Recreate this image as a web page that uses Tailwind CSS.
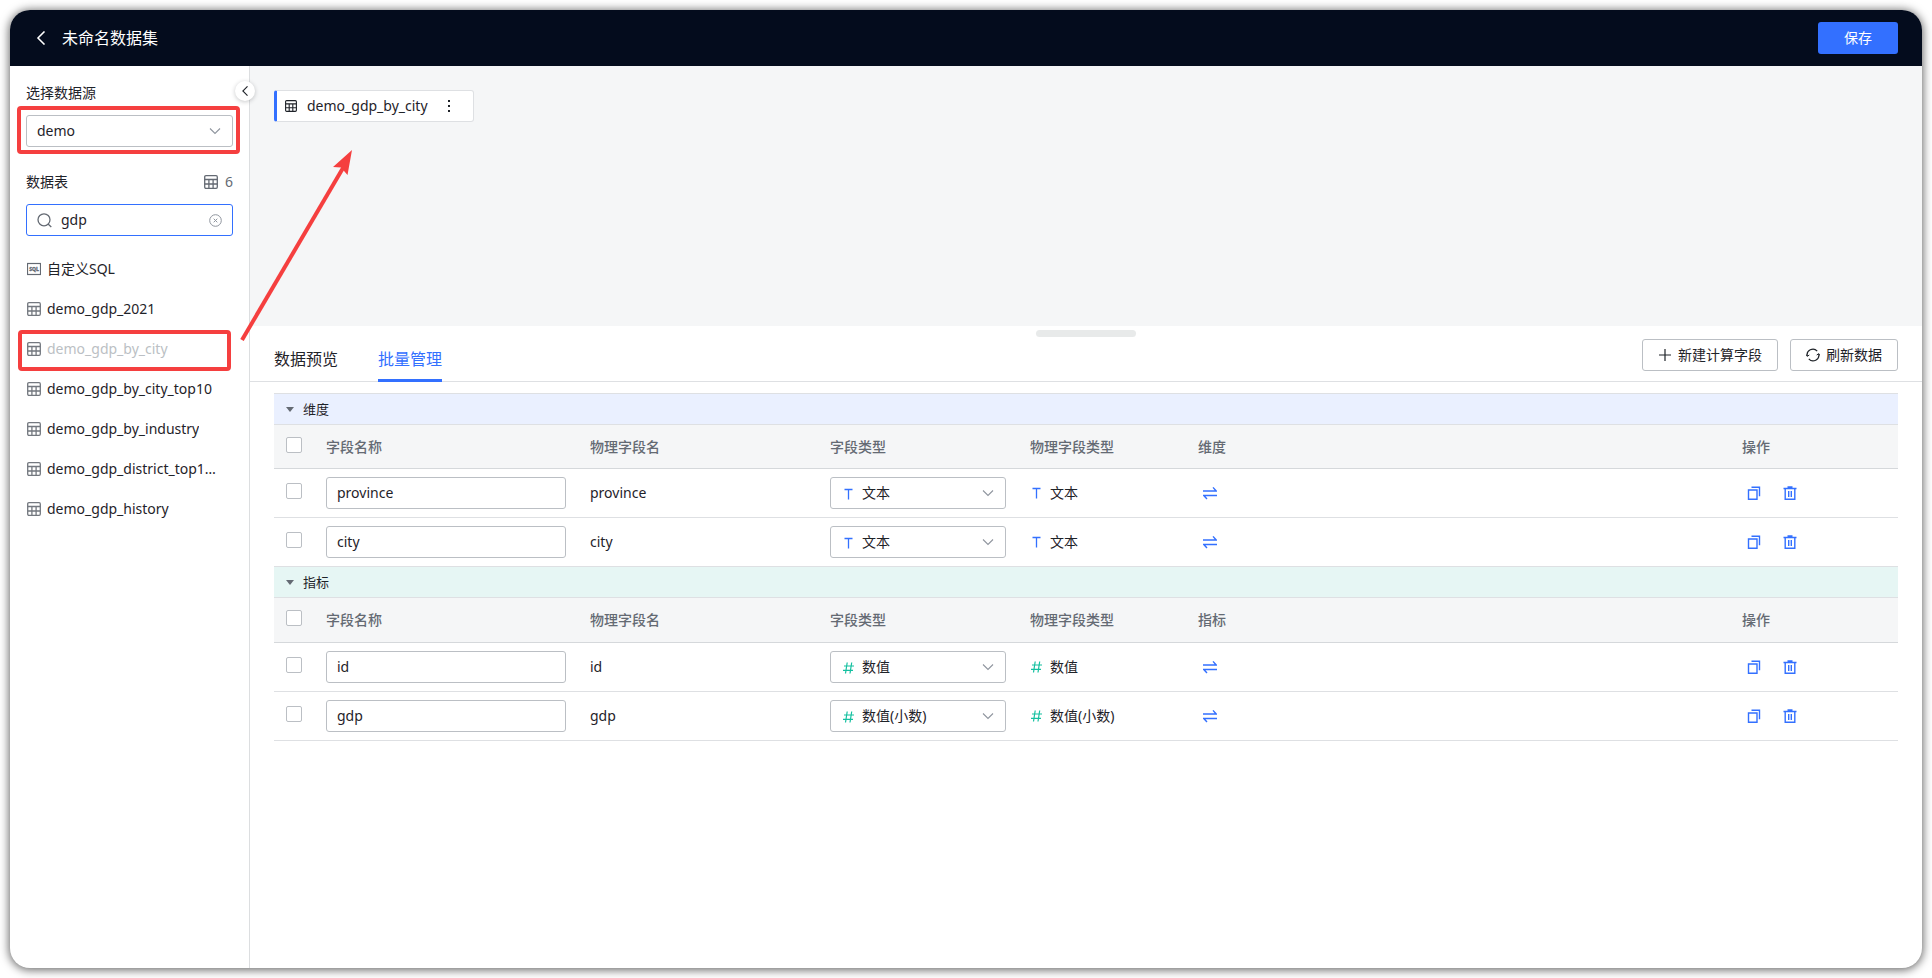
<!DOCTYPE html>
<html lang="zh-CN">
<head>
<meta charset="utf-8">
<meta name="viewport" content="width=device-width, initial-scale=1">
<title>未命名数据集</title>
<script src="https://cdn.jsdelivr.net/npm/@tailwindcss/browser@4"></script>
</head>
<body class="relative flex h-screen bg-white p-[10px] font-['Noto_Sans','Noto_Sans_CJK_SC',sans-serif] text-sm text-[#1f2329]">

<!-- Shared icons -->
<svg class="hidden" aria-hidden="true">
  <symbol id="i-table" viewBox="0 0 14 14"><g fill="none" stroke="currentColor" stroke-width="1.3"><rect x=".7" y=".7" width="12.6" height="12.6" rx="1.2"/><path d="M.6 4.5h12.8M.6 9h12.8M4.9 4.5v9M9.1 4.5v9"/></g></symbol>
  <symbol id="i-down" viewBox="0 0 12 12"><path d="M1 3.5l5 5 5-5" fill="none" stroke="currentColor" stroke-width="1.1"/></symbol>
  <symbol id="i-left" viewBox="0 0 12 12"><path d="M9 .4L3.400 6 9 11.600" fill="none" stroke="currentColor" stroke-width="1.3"/></symbol>
  <symbol id="i-text" viewBox="0 0 12 12"><path d="M2.500 1.500h8M6.500 1.500v10" fill="none" stroke="currentColor" stroke-width="1.3"/></symbol>
  <symbol id="i-num" viewBox="0 0 12 12"><path d="M2 4h10M1 8.300h10M5.200.5l-1.700 11M9.700.5l-1.700 11" fill="none" stroke="currentColor" stroke-width="1.2"/></symbol>
  <symbol id="i-swap" viewBox="0 0 14 14"><path d="M0 5h13.200L10 1.400M14 9.500H.8L4 13" fill="none" stroke="currentColor" stroke-width="1.4"/></symbol>
  <symbol id="i-copy" viewBox="0 0 14 14"><path d="M1.500 4h8.500v9.300H1.500zM4.500 1.200h8v9" fill="none" stroke="currentColor" stroke-width="1.4"/></symbol>
  <symbol id="i-trash" viewBox="0 0 14 14"><path d="M.5 2.500h13M4.500 1h5M2.200 2.500v10.800h9.600V2.500M5.700 5v6M8.300 5v6" fill="none" stroke="currentColor" stroke-width="1.400"/></symbol>
  <symbol id="i-caret" viewBox="0 0 8 5"><path d="M0 0h8L4 5z" fill="currentColor"/></symbol>
</svg>

<div class="flex min-w-0 flex-1 flex-col overflow-hidden rounded-[20px] bg-white shadow-[0_1px_10px_1px_rgba(0,0,0,0.6)]">
  <header class="flex h-14 shrink-0 items-center bg-[#040c1d] px-6 text-white">
    <button type="button" aria-label="返回" class="mr-[14px] flex size-[14px] items-center justify-center"><svg class="size-[14px] shrink-0"><use href="#i-left"/></svg></button>
    <h1 class="text-base leading-6">未命名数据集</h1>
    <button type="button" class="ml-auto h-8 w-20 rounded-[3px] bg-[#3370ff]">保存</button>
  </header>

  <div class="flex min-h-0 flex-1">
    <aside class="relative flex w-60 shrink-0 flex-col border-r border-[#dcdee0] px-4 pt-[15px]">
      <label for="source" class="leading-6">选择数据源</label>
      <div class="relative mt-[10px] w-[207px]">
        <select id="source" class="h-8 w-full appearance-none rounded-[3px] border border-[#bbbfc4] bg-white pr-8 pl-[10px]"><option>demo</option></select>
        <svg class="pointer-events-none absolute top-[10px] right-3 size-3 text-[#8f959e]"><use href="#i-down"/></svg>
      </div>
      <div class="mt-[23px] flex w-[207px] items-center leading-6">
        <label for="search" class="flex-1">数据表</label>
        <svg class="mr-[7px] size-[14px] text-[#646a73]"><use href="#i-table"/></svg>
        <span class="text-[#646a73]">6</span>
      </div>
      <div class="mt-[10px] flex h-8 w-[207px] items-center rounded-[3px] border border-[#3370ff] px-[10px]">
        <svg class="size-[15px] shrink-0 text-[#646a73]" viewBox="0 0 15 15"><path d="M11.300 11.300l3 2.700M13 6.800A6 6 0 1 1 1 6.800a6 6 0 0 1 12 0z" fill="none" stroke="currentColor" stroke-width="1.300"/></svg>
        <input id="search" type="text" value="gdp" class="ml-[9px] w-0 flex-1 bg-transparent outline-none">
        <button type="button" aria-label="清除" class="text-[#8f959e]"><svg class="size-[13px]" viewBox="0 0 13 13"><g fill="none" stroke="currentColor"><circle cx="6.500" cy="6.500" r="5.800"/><path d="M4.700 4.700l3.600 3.600M8.300 4.700L4.700 8.300"/></g></svg></button>
      </div>
      <ul class="mt-[13px] w-48">
        <li><a href="#" class="flex h-10 items-center"><svg class="mr-[6px] ml-px size-[14px] shrink-0 text-[#646a73]" viewBox="0 0 14 14"><rect x=".5" y="1.500" width="13" height="11" fill="none" stroke="currentColor" stroke-width="1.200"/><text x="7" y="9" text-anchor="middle" font-size="5" font-weight="800" fill="currentColor" stroke="currentColor" stroke-width=".3">SQL</text></svg><span>自定义SQL</span></a></li>
        <li><a href="#" class="flex h-10 items-center"><svg class="mr-[6px] ml-px size-[14px] shrink-0 text-[#73787f]"><use href="#i-table"/></svg><span class="truncate">demo_gdp_2021</span></a></li>
        <li><a href="#" class="flex h-10 items-center"><svg class="mr-[6px] ml-px size-[14px] shrink-0 text-[#73787f]"><use href="#i-table"/></svg><span class="truncate text-[#bbbfc4]">demo_gdp_by_city</span></a></li>
        <li><a href="#" class="flex h-10 items-center"><svg class="mr-[6px] ml-px size-[14px] shrink-0 text-[#73787f]"><use href="#i-table"/></svg><span class="truncate">demo_gdp_by_city_top10</span></a></li>
        <li><a href="#" class="flex h-10 items-center"><svg class="mr-[6px] ml-px size-[14px] shrink-0 text-[#73787f]"><use href="#i-table"/></svg><span class="truncate">demo_gdp_by_industry</span></a></li>
        <li><a href="#" class="flex h-10 items-center"><svg class="mr-[6px] ml-px size-[14px] shrink-0 text-[#73787f]"><use href="#i-table"/></svg><span class="truncate">demo_gdp_district_top100</span></a></li>
        <li><a href="#" class="flex h-10 items-center"><svg class="mr-[6px] ml-px size-[14px] shrink-0 text-[#73787f]"><use href="#i-table"/></svg><span class="truncate">demo_gdp_history</span></a></li>
      </ul>
      <button type="button" aria-label="收起" class="absolute top-[15px] -right-[6px] z-10 flex size-5 items-center justify-center rounded-full bg-white shadow-[0_1px_4px_rgba(31,35,41,0.25)]"><svg class="size-[10px]"><use href="#i-left"/></svg></button>
    </aside>

    <main class="flex min-w-0 flex-1 flex-col">
      <section class="h-[260px] shrink-0 bg-[#f5f6f7] px-6 pt-6">
        <div class="flex h-8 w-[200px] items-center rounded-[3px] border border-l-[3px] border-[#dee0e3] border-l-[#3370ff] bg-white pl-2">
          <svg class="size-3 shrink-0"><use href="#i-table"/></svg>
          <span class="ml-[10px]">demo_gdp_by_city</span>
          <button type="button" aria-label="更多" class="ml-auto mr-[18px]"><svg class="h-3 w-3" viewBox="0 0 12 12" fill="currentColor"><path d="M5 0h2v2H5zM5 5h2v2H5zM5 10h2v2H5z"/></svg></button>
        </div>
      </section>

      <div class="relative flex h-14 shrink-0 items-stretch border-b border-[#dee0e3] px-6">
        <div class="absolute top-1 left-1/2 h-[7px] w-[100px] -translate-x-1/2 rounded-full bg-[#e8eaea]"></div>
        <nav class="-mb-px flex gap-10 text-base">
          <a href="#" class="flex items-center border-b-3 border-transparent pt-3">数据预览</a>
          <a href="#" class="flex items-center border-b-3 border-[#3370ff] pt-3 text-[#3370ff]">批量管理</a>
        </nav>
        <div class="mt-[13px] ml-auto flex gap-3">
          <button type="button" class="flex h-8 items-center gap-[6px] rounded-[3px] border border-[#bbbfc4] px-[15px]"><svg class="size-[14px]" viewBox="0 0 14 14"><path d="M1 7h12M7 1v12" fill="none" stroke="currentColor" stroke-width="1.200"/></svg>新建计算字段</button>
          <button type="button" class="flex h-8 items-center gap-[6px] rounded-[3px] border border-[#bbbfc4] px-[15px]"><svg class="size-[14px]" viewBox="0 0 14 14"><g fill="none" stroke="currentColor" stroke-width="1.200"><path d="M1.300 8.200A5.700 5.700 0 0 1 11.200 3.200M12.700 5.800A5.700 5.700 0 0 1 2.800 10.800"/><path d="M0 6.400l1.300 1.900 2-1.300M14 7.600l-1.300-1.900-2 1.300" stroke-width="1"/></g></svg>刷新数据</button>
        </div>
      </div>

      <div class="px-6 pt-[11px]">
        <table class="w-full table-fixed border-separate border-spacing-0 border-t border-[#dee0e3] text-left [&_td]:border-b [&_td]:border-[#dee0e3] [&_td]:py-0 [&_th]:border-b [&_th]:border-[#d5d8db] [&_th]:px-3 [&_th]:py-0 [&_th]:font-medium [&_th]:text-[#646a73]">
          <colgroup><col class="w-10"><col class="w-[264px]"><col class="w-[240px]"><col class="w-[200px]"><col class="w-[168px]"><col><col class="w-[168px]"></colgroup>
          <tbody>
            <tr class="h-[31px] bg-[#eaf0ff]"><td colspan="7" class="px-3"><button type="button" class="flex items-center gap-[9px] text-[13px] leading-5"><svg class="h-[5px] w-2 text-[#646a73]"><use href="#i-caret"/></svg>维度</button></td></tr>
            <tr class="h-11 bg-[#f5f6f7]"><th><input type="checkbox" aria-label="全选维度" class="mb-1 block size-4 appearance-none rounded-[2px] border border-[#bbbfc4] bg-white"></th><th>字段名称</th><th>物理字段名</th><th>字段类型</th><th>物理字段类型</th><th>维度</th><th>操作</th></tr>
            <tr class="h-[49px]">
              <td class="pl-3"><input type="checkbox" aria-label="选择 province" class="mb-1 block size-4 appearance-none rounded-[2px] border border-[#bbbfc4] bg-white"></td>
              <td class="px-3"><input type="text" aria-label="字段名称" value="province" class="block h-8 w-full rounded-[3px] border border-[#bbbfc4] px-[10px] pb-[2px]"></td>
              <td class="px-3">province</td>
              <td class="px-3"><div class="relative"><svg class="pointer-events-none absolute top-[11px] left-3 size-3 text-[#3370ff]"><use href="#i-text"/></svg><select aria-label="字段类型" class="block h-8 w-full appearance-none rounded-[3px] border border-[#bbbfc4] pr-8 pl-[31px]"><option>文本</option></select><svg class="pointer-events-none absolute top-[10px] right-3 size-3 text-[#8f959e]"><use href="#i-down"/></svg></div></td>
              <td class="px-3"><span class="flex items-center gap-2"><svg class="size-3 text-[#3370ff]"><use href="#i-text"/></svg>文本</span></td>
              <td class="px-[17px]"><button type="button" aria-label="转换" class="block text-[#3370ff]"><svg class="size-[14px]"><use href="#i-swap"/></svg></button></td>
              <td class="pl-[17px]"><div class="flex gap-[22px] text-[#3370ff]"><button type="button" aria-label="复制"><svg class="size-[14px]"><use href="#i-copy"/></svg></button><button type="button" aria-label="删除"><svg class="size-[14px]"><use href="#i-trash"/></svg></button></div></td>
            </tr>
            <tr class="h-[49px]">
              <td class="pl-3"><input type="checkbox" aria-label="选择 city" class="mb-1 block size-4 appearance-none rounded-[2px] border border-[#bbbfc4] bg-white"></td>
              <td class="px-3"><input type="text" aria-label="字段名称" value="city" class="block h-8 w-full rounded-[3px] border border-[#bbbfc4] px-[10px] pb-[2px]"></td>
              <td class="px-3">city</td>
              <td class="px-3"><div class="relative"><svg class="pointer-events-none absolute top-[11px] left-3 size-3 text-[#3370ff]"><use href="#i-text"/></svg><select aria-label="字段类型" class="block h-8 w-full appearance-none rounded-[3px] border border-[#bbbfc4] pr-8 pl-[31px]"><option>文本</option></select><svg class="pointer-events-none absolute top-[10px] right-3 size-3 text-[#8f959e]"><use href="#i-down"/></svg></div></td>
              <td class="px-3"><span class="flex items-center gap-2"><svg class="size-3 text-[#3370ff]"><use href="#i-text"/></svg>文本</span></td>
              <td class="px-[17px]"><button type="button" aria-label="转换" class="block text-[#3370ff]"><svg class="size-[14px]"><use href="#i-swap"/></svg></button></td>
              <td class="pl-[17px]"><div class="flex gap-[22px] text-[#3370ff]"><button type="button" aria-label="复制"><svg class="size-[14px]"><use href="#i-copy"/></svg></button><button type="button" aria-label="删除"><svg class="size-[14px]"><use href="#i-trash"/></svg></button></div></td>
            </tr>
          </tbody>
          <tbody>
            <tr class="h-[31px] bg-[#e6f6f4]"><td colspan="7" class="px-3"><button type="button" class="flex items-center gap-[9px] text-[13px] leading-5"><svg class="h-[5px] w-2 text-[#646a73]"><use href="#i-caret"/></svg>指标</button></td></tr>
            <tr class="h-[45px] bg-[#f5f6f7]"><th><input type="checkbox" aria-label="全选指标" class="mb-1 block size-4 appearance-none rounded-[2px] border border-[#bbbfc4] bg-white"></th><th>字段名称</th><th>物理字段名</th><th>字段类型</th><th>物理字段类型</th><th>指标</th><th>操作</th></tr>
            <tr class="h-[49px]">
              <td class="pl-3"><input type="checkbox" aria-label="选择 id" class="mb-1 block size-4 appearance-none rounded-[2px] border border-[#bbbfc4] bg-white"></td>
              <td class="px-3"><input type="text" aria-label="字段名称" value="id" class="block h-8 w-full rounded-[3px] border border-[#bbbfc4] px-[10px] pb-[2px]"></td>
              <td class="px-3">id</td>
              <td class="px-3"><div class="relative"><svg class="pointer-events-none absolute top-[11px] left-3 size-3 text-[#14c0a0]"><use href="#i-num"/></svg><select aria-label="字段类型" class="block h-8 w-full appearance-none rounded-[3px] border border-[#bbbfc4] pr-8 pl-[31px]"><option>数值</option></select><svg class="pointer-events-none absolute top-[10px] right-3 size-3 text-[#8f959e]"><use href="#i-down"/></svg></div></td>
              <td class="px-3"><span class="flex items-center gap-2"><svg class="size-3 text-[#14c0a0]"><use href="#i-num"/></svg>数值</span></td>
              <td class="px-[17px]"><button type="button" aria-label="转换" class="block text-[#3370ff]"><svg class="size-[14px]"><use href="#i-swap"/></svg></button></td>
              <td class="pl-[17px]"><div class="flex gap-[22px] text-[#3370ff]"><button type="button" aria-label="复制"><svg class="size-[14px]"><use href="#i-copy"/></svg></button><button type="button" aria-label="删除"><svg class="size-[14px]"><use href="#i-trash"/></svg></button></div></td>
            </tr>
            <tr class="h-[49px]">
              <td class="pl-3"><input type="checkbox" aria-label="选择 gdp" class="mb-1 block size-4 appearance-none rounded-[2px] border border-[#bbbfc4] bg-white"></td>
              <td class="px-3"><input type="text" aria-label="字段名称" value="gdp" class="block h-8 w-full rounded-[3px] border border-[#bbbfc4] px-[10px] pb-[2px]"></td>
              <td class="px-3">gdp</td>
              <td class="px-3"><div class="relative"><svg class="pointer-events-none absolute top-[11px] left-3 size-3 text-[#14c0a0]"><use href="#i-num"/></svg><select aria-label="字段类型" class="block h-8 w-full appearance-none rounded-[3px] border border-[#bbbfc4] pr-8 pl-[31px]"><option>数值(小数)</option></select><svg class="pointer-events-none absolute top-[10px] right-3 size-3 text-[#8f959e]"><use href="#i-down"/></svg></div></td>
              <td class="px-3"><span class="flex items-center gap-2"><svg class="size-3 text-[#14c0a0]"><use href="#i-num"/></svg>数值(小数)</span></td>
              <td class="px-[17px]"><button type="button" aria-label="转换" class="block text-[#3370ff]"><svg class="size-[14px]"><use href="#i-swap"/></svg></button></td>
              <td class="pl-[17px]"><div class="flex gap-[22px] text-[#3370ff]"><button type="button" aria-label="复制"><svg class="size-[14px]"><use href="#i-copy"/></svg></button><button type="button" aria-label="删除"><svg class="size-[14px]"><use href="#i-trash"/></svg></button></div></td>
            </tr>
          </tbody>
        </table>
      </div>
    </main>
  </div>
</div>

<!-- Red guide marks laid over the page -->
<svg class="pointer-events-none absolute top-0 left-0 z-20 h-[400px] w-[400px]" viewBox="0 0 400 400" aria-hidden="true">
  <g fill="none" stroke="#f53f3f" stroke-width="4"><rect x="19" y="108" width="219" height="44" rx="2"/><rect x="20" y="332" width="209" height="37" rx="2"/><path d="M242 340L343 168"/></g>
  <path d="M352 150L333 167 341 167.500 347.500 175z" fill="#f53f3f"/>
</svg>
</body>
</html>
